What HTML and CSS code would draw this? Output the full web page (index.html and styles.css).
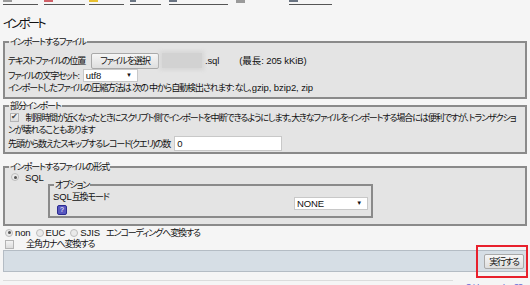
FILE: index.html
```html
<!DOCTYPE html>
<html lang="ja">
<head>
    <meta charset="UTF-8">
    <title>インポート</title>
    <link rel="stylesheet" href="styles.css">
</head>
<body>

<div class="tabs">
    <span class="tab t1"><span class="ico grey"></span><a href="#">構造</a></span>
    <span class="tab t2"><span class="ico red"></span><a href="#">SQL</a></span>
    <span class="tab t3"><span class="ico yellow"></span><a href="#">検索</a></span>
    <span class="tab t4"><span class="ico dark"></span><a href="#">クエリ</a></span>
    <span class="tab t5"><span class="ico dark"></span><a href="#">エクスポート</a></span>
    <span class="tab t6 plain"><span class="ico grey"></span></span>
    <span class="tab t7"><span class="ico dark"></span><a href="#">操作</a></span>
</div>

<h2 class="title">インポート</h2>

<form>
    <fieldset class="box box-file">
        <legend>インポートするファイル</legend>
        <div class="row row-file">
            <span>テキストファイルの位置</span>
            <button type="button" class="btn file-btn">ファイルを選択</button>
            <span class="blurred"></span>
            <span class="en ext">.sql</span>
            <span class="en max">(最長: 205 kKiB)</span>
        </div>
        <div class="row row-charset">
            <span>ファイルの文字セット:</span>
            <span class="select sel-charset en">utf8</span>
        </div>
        <div class="row row-text">インポートしたファイルの圧縮方法は 次の 中から自動検出されます: なし, <span class="en">gzip, bzip2, zip</span></div>
    </fieldset>

    <fieldset class="box box-partial">
        <legend>部分インポート</legend>
        <div class="row row-wrap"><span class="check checked"></span> 制限時間が近くなったときにスクリプト側でインポートを中断できるようにします。大きなファイルをインポートする場合には便利ですが、トランザクションが壊れることもあります</div>
        <div class="row row-skip">
            <span>先頭から数えたスキップするレコード(クエリ)の数</span>
            <span class="text-input en">0</span>
        </div>
    </fieldset>

    <fieldset class="box box-format">
        <legend>インポートするファイルの形式</legend>
        <div class="row row-sql"><span class="radio checked"></span><span class="en">SQL</span></div>
        <fieldset class="box inner">
            <legend>オプション</legend>
            <div class="opt-grid">
                <div class="opt-label">
                    <div><span class="en">SQL</span>互換モード</div>
                    <span class="help">?</span>
                </div>
                <span class="select sel-mode en">NONE</span>
            </div>
        </fieldset>
    </fieldset>

    <div class="row row-enc">
        <span class="radio checked"></span><span class="en">non</span>
        <span class="radio"></span><span class="en">EUC</span>
        <span class="radio"></span><span class="en">SJIS</span>
        <span class="enc-label">エンコーディングへ変換する</span>
    </div>
    <div class="row row-kana">
        <span class="check"></span><span class="kana-label">全角カナへ変換する</span>
    </div>

    <div class="submit-bar">
        <span class="highlight"><button type="button" class="btn go-btn">実行する</button></span>
    </div>
</form>

<div class="footer">
    <span class="footer-line"></span>
    <a href="#" class="newwin"><span class="ico yellow small"></span>別ウィンドウで開く</a>
</div>

</body>
</html>
```

FILE: styles.css
```css
body {
    margin: 0;
    padding: 0 3px;
    background: #f5f5f5;
    color: #111;
    font-family: "Liberation Sans", "Noto Sans CJK JP", sans-serif;
    font-size: 9px;
    font-feature-settings: "palt";
    letter-spacing: -1.1px;
    overflow: hidden;
}
a {
    color: #1a1ac8;
}
.en {
    font-size: 9.5px;
    letter-spacing: -0.1px;
}

/* tab strip, only the bottom of it is visible */
.tabs {
    height: 5px;
    overflow: hidden;
    display: flex;
    align-items: flex-end;
}
.tab {
    display: flex;
    align-items: flex-end;
    gap: 5px;
    padding: 0 3px 0 0;
    border-bottom: 1px solid #555;
    height: 18px;
    line-height: 19px;
    letter-spacing: 0;
}
.tab.plain {
    border-bottom: none;
}
.t1 { width: 32px; }
.t2 { width: 38px; margin-left: 6px; }
.t3 { width: 32px; margin-left: 4px; }
.t4 { width: 28px; margin-left: 6px; }
.t5 { width: 56px; margin-left: 8px; }
.t6 { width: 10px; margin-left: 8px; }
.t7 { width: 40px; margin-left: 40px; }
.ico {
    display: inline-block;
    width: 9px;
    height: 10px;
    margin-bottom: 2px;
}
.ico.grey { background: #9a9a9a; }
.ico.red { background: #d06068; }
.ico.yellow { background: #e8c030; }
.ico.dark { background: #6a7482; }
.ico.small {
    width: 6px;
    height: 4px;
    margin: 0 3px 0 0;
}

.title {
    font-size: 12px;
    letter-spacing: -2.6px;
    font-weight: normal;
    margin: 11px 0 4px;
    line-height: 16px;
}

.box {
    margin: 0 0 1px;
    padding: 2px 3px 3px;
    border: 2px solid #8a8a8a;
    background: #e4e4e4;
    min-width: 0;
}
.box legend {
    padding: 0 1px;
    margin-left: 1px;
    line-height: 12px;
}
.row {
    line-height: 12px;
}

.row-file {
    display: flex;
    align-items: center;
    height: 17px;
    margin-top: 2px;
}
.btn {
    font: inherit;
    letter-spacing: inherit;
    color: #111;
    background: linear-gradient(#f6f6f6, #dedede);
    border: 1px solid #a9a9a9;
    border-radius: 2px;
    padding: 0 8px;
    height: 16px;
    line-height: 14px;
}
.file-btn {
    margin-left: 6px;
}
.blurred {
    width: 40px;
    height: 15px;
    margin-left: 3px;
    background: #d2d2d2;
    box-shadow: 0 0 4px 2px #d6d6d6;
}
.ext {
    margin-left: 3px;
}
.max {
    margin-left: 20px;
}

.row-charset {
    display: flex;
    align-items: center;
    height: 13px;
}
.select {
    position: relative;
    display: inline-block;
    background: #fff;
    border: 1px solid #c8c8c8;
    height: 11px;
    line-height: 11px;
    padding-left: 2px;
}
.select::after {
    content: "▼";
    position: absolute;
    right: 5px;
    top: 0;
    font-size: 6px;
}
.sel-charset {
    width: 51px;
    margin-left: 4px;
}

.box-partial {
    padding-top: 0;
    padding-bottom: 1px;
}
.row-wrap {
    line-height: 12px;
    line-break: anywhere;
}
.check {
    display: inline-block;
    box-sizing: border-box;
    width: 9px;
    height: 9px;
    margin: 0 5px 0 2px;
    border: 1px solid #b4b4b4;
    background: linear-gradient(#f4f4f4, #dcdcdc);
    vertical-align: -1px;
    position: relative;
}
.check.checked::after {
    content: "✔";
    position: absolute;
    left: 0;
    top: -3px;
    font-size: 8px;
    letter-spacing: 0;
    color: #444;
}
.row-skip {
    display: flex;
    align-items: center;
    height: 15px;
}
.text-input {
    display: inline-block;
    width: 104px;
    height: 13px;
    line-height: 13px;
    margin-left: 4px;
    padding-left: 2px;
    background: #fff;
    border: 1px solid #c8c8c8;
}

.box-format {
    margin-top: 8px;
    padding-top: 0;
    padding-bottom: 6px;
}
.box-format > legend {
    line-height: 10px;
}
.radio {
    display: inline-block;
    box-sizing: border-box;
    width: 8px;
    height: 8px;
    border-radius: 50%;
    border: 1px solid #bdbdbd;
    background: #eaeaea;
    vertical-align: -1px;
    position: relative;
}
.radio.checked::after {
    content: "";
    position: absolute;
    left: 1.5px;
    top: 1.5px;
    width: 3px;
    height: 3px;
    border-radius: 50%;
    background: #555;
}
.row-sql {
    display: flex;
    align-items: center;
    gap: 6px;
    margin-top: -1px;
    padding-left: 3px;
    height: 12px;
    line-height: 11px;
}
.box.inner {
    margin: -4px 0 0 40px;
    width: 315px;
    padding: 0 3px 1px;
}
.opt-grid {
    display: flex;
    justify-content: space-between;
    align-items: center;
}
.opt-label {
    line-height: 12px;
}
.help {
    display: inline-block;
    width: 8px;
    height: 8px;
    margin: 1px 0 0 4px;
    background: #5858c0;
    border: 1px solid #2c2c90;
    border-radius: 2px;
    color: #fff;
    font-size: 7px;
    letter-spacing: 0;
    line-height: 8px;
    text-align: center;
}
.sel-mode {
    width: 70px;
    margin-right: 0;
}

.row-enc {
    display: flex;
    align-items: center;
    gap: 2px;
    padding-left: 2px;
    height: 11px;
}
.row-enc .radio {
    margin-left: 3px;
}
.row-enc .radio:first-child {
    margin-left: 0;
}
.enc-label {
    margin-left: 4px;
}
.row-kana {
    display: flex;
    align-items: center;
    height: 12px;
}
.kana-label {
    margin-left: 7px;
}

.submit-bar {
    display: flex;
    justify-content: flex-end;
    align-items: center;
    height: 20px;
    background: #d6dee5;
    border: 1px solid #b4bcc4;
}
.highlight {
    border: 2px solid #e8202c;
    padding: 7px 2px 7px 6px;
    margin: -6px -2px -6px 0;
}
.go-btn {
    height: 15px;
    padding: 0 4px;
}

.footer {
    display: flex;
    align-items: flex-end;
    margin-top: 8px;
    height: 10px;
}
.footer-line {
    flex: 1;
    border-top: 1px solid #dcdcdc;
    align-self: flex-start;
}
.newwin {
    display: flex;
    align-items: center;
    margin-left: 4px;
    line-height: 10px;
    position: relative;
    top: 4px;
}
```
